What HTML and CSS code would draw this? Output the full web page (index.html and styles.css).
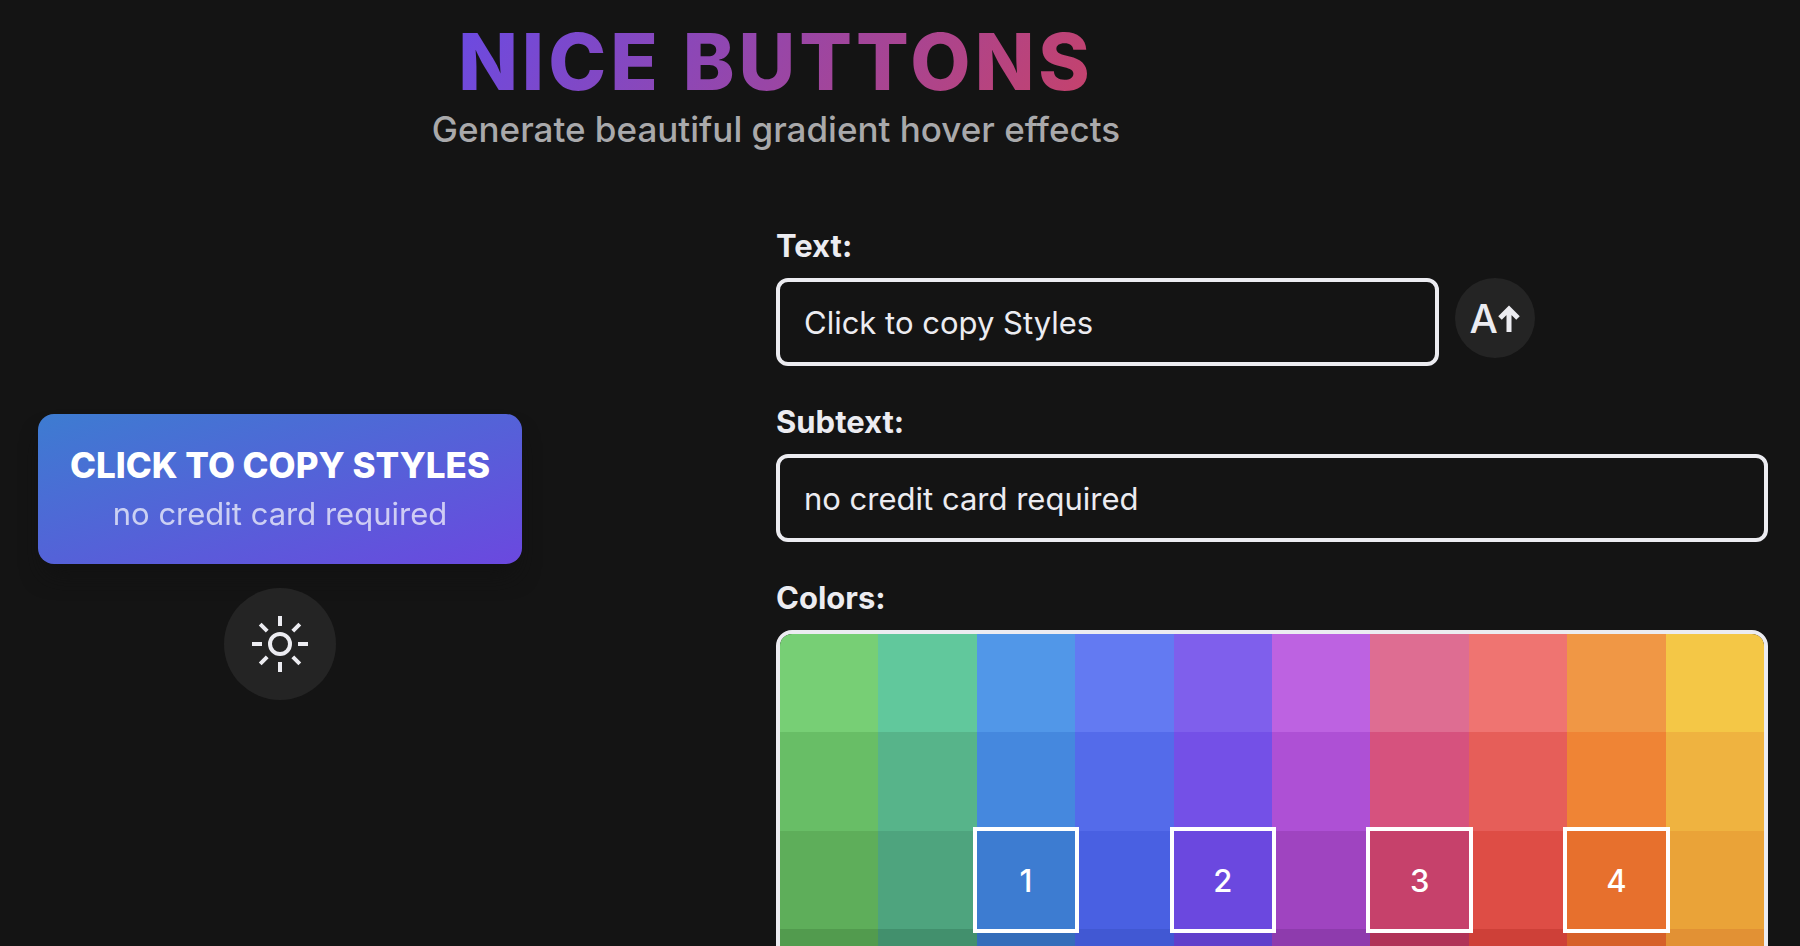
FILE: index.html
```
<!DOCTYPE html>
<html lang="en">
<head>
<meta charset="utf-8">
<meta name="viewport" content="width=device-width, initial-scale=1">
<title>Nice Buttons</title>
<link rel="stylesheet" href="styles.css">
</head>
<body>
<div class="page">
  <header class="header">
    <h1 class="title">NICE BUTTONS</h1>
    <p class="tagline">Generate beautiful gradient hover effects</p>
  </header>

  <section class="preview" aria-label="Preview">
    <button class="cta" type="button">
      <span class="cta-text">Click to copy Styles</span>
      <span class="cta-subtext">no credit card required</span>
    </button>
    <button class="round theme-toggle" type="button" aria-label="Toggle theme">
      <svg class="sun" viewBox="0 0 56 56" fill="none" stroke="currentColor" stroke-width="4" aria-hidden="true">
        <circle cx="28" cy="28" r="10"/>
        <path d="M28 0v10M28 46v10M0 28h10M46 28h10M8.200 8.200l7 7M40.800 40.800l7 7M47.800 8.200l-7 7M15.200 40.800l-7 7"/>
      </svg>
    </button>
  </section>

  <form class="form">
    <div class="field">
      <label class="label" for="text">Text:</label>
      <div class="input-row">
        <input class="input input-short" id="text" type="text" value="Click to copy Styles">
        <button class="round case-toggle" type="button" aria-label="Toggle uppercase">
          <span>A</span>
          <svg class="arrow" viewBox="0 0 22 27" fill="none" stroke="currentColor" stroke-width="5" aria-hidden="true">
            <path d="M11 27V4M2 13l9-9 9 9"/>
          </svg>
        </button>
      </div>
    </div>
    <div class="field">
      <label class="label" for="subtext">Subtext:</label>
      <input class="input" id="subtext" type="text" value="no credit card required">
    </div>
    <div class="field">
      <span class="label" id="colors-label">Colors:</span>
      <div class="palette" id="palette" role="group" aria-labelledby="colors-label"></div>
    </div>
  </form>
</div>
<script src="script.js"></script>
</body>
</html>
```
FILE: styles.css
```
* {
  box-sizing: border-box;
}

body {
  margin: 0;
  height: 100vh;
  overflow: hidden;
  background: #141414;
  color: #ececf1;
  font-family: Inter, "Liberation Sans", sans-serif;
  font-size: 31px;
}

button,
input {
  font: inherit;
  color: inherit;
}

button {
  border: 0;
  cursor: pointer;
}

.page {
  display: grid;
  grid-template-columns: repeat(7, 1fr);
  row-gap: 72px;
  padding: 20px 32px;
}

.header {
  grid-column: 1 / 7;
  text-align: center;
}

.title {
  display: inline-block;
  margin: 0;
  font-size: 78px;
  font-weight: 800;
  line-height: 84px;
  letter-spacing: 4px;
  color: transparent;
  background: linear-gradient(120deg, #6b4ae2, #c6426b);
  background-clip: text;
  -webkit-background-clip: text;
}

.tagline {
  margin: 0;
  font-size: 35px;
  font-weight: 500;
  line-height: 50px;
  color: #a9a9ab;
}

.preview {
  grid-column: 1 / 3;
  display: flex;
  flex-direction: column;
  align-items: center;
  gap: 24px;
  padding-top: 188px;
}

.cta {
  display: flex;
  flex-direction: column;
  align-items: center;
  gap: 8px;
  padding: 30px 32px;
  border-radius: 16px;
  background: linear-gradient(to bottom right, #3d7cd1, #6b48df);
  box-shadow: 0 16px 24px -8px #111;
  color: #fff;
  white-space: nowrap;
}

.cta-text {
  font-size: 35px;
  font-weight: 800;
  line-height: 42px;
  text-transform: uppercase;
}

.cta-subtext {
  line-height: 40px;
  opacity: 0.7;
}

.round {
  display: flex;
  align-items: center;
  justify-content: center;
  flex: none;
  padding: 0;
  border-radius: 50%;
  background: #242424;
}

.theme-toggle {
  width: 112px;
  height: 112px;
}

.sun {
  width: 56px;
  height: 56px;
}

.form {
  grid-column: 4 / 8;
  display: flex;
  flex-direction: column;
  gap: 36px;
}

.field {
  display: flex;
  flex-direction: column;
  gap: 12px;
}

.label {
  font-weight: 700;
  line-height: 40px;
}

.input-row {
  display: flex;
  align-items: flex-start;
  gap: 16px;
}

.input {
  width: 100%;
  height: 88px;
  padding: 0 24px;
  border: 4px solid #ececf1;
  border-radius: 12px;
  background: transparent;
}

.input-short {
  width: 66.8%;
}

.case-toggle {
  width: 80px;
  height: 80px;
  font-size: 40px;
  font-weight: 500;
}

.arrow {
  width: 22px;
  height: 27px;
}

.palette {
  display: grid;
  grid-template-columns: repeat(10, 1fr);
  overflow: hidden;
  border: 4px solid #ececf1;
  border-radius: 16px;
}

.swatch {
  aspect-ratio: 1;
  padding: 0;
  color: #fff;
  font-weight: 500;
}

.swatch-selected {
  z-index: 1;
  box-shadow: 0 0 0 4px #fff;
}
```
FILE: script.js
```
const rows = [
  ["#77cf75", "#61c89c", "#5197e8", "#637af2", "#7f5fec", "#bd62e1", "#de6d92", "#ef7471", "#f09745", "#f4c746"],
  ["#68be66", "#57b48a", "#4588de", "#546bea", "#7450e7", "#ae50d5", "#d6527e", "#e65e59", "#ef8435", "#efb340"],
  ["#5eae5a", "#4ea47e", "#3d7cd1", "#4960e2", "#6b48df", "#9f44c0", "#c6416b", "#de4d45", "#e7702d", "#eaa338"],
  ["#529b4e", "#42906d", "#346dba", "#4158d3", "#603fcb", "#8e3bad", "#b03358", "#ce4038", "#d66029", "#e29134"]
];
const selected = { "2-2": 1, "2-4": 2, "2-6": 3, "2-8": 4 };
const palette = document.getElementById("palette");

rows.forEach((colors, r) => {
  colors.forEach((color, c) => {
    const swatch = document.createElement("button");
    const order = selected[`${r}-${c}`];
    swatch.type = "button";
    swatch.className = order ? "swatch swatch-selected" : "swatch";
    swatch.style.backgroundColor = color;
    swatch.setAttribute("aria-label", order ? `Color ${order}, ${color}` : color);
    if (order) swatch.textContent = order;
    palette.append(swatch);
  });
});
```
